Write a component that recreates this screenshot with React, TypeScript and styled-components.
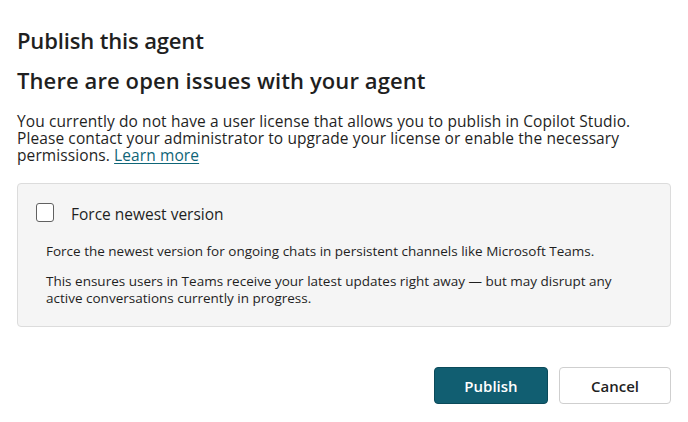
import React from "react";
import styled, { createGlobalStyle } from "styled-components";

const Global = createGlobalStyle`
  html, body { margin: 0; padding: 0; background: #ffffff; }
  body { font-family: "Open Sans", "Noto Sans", sans-serif; color: #1f1f1f; }
  * { box-sizing: border-box; }
`;

const Dialog = styled.div`
  width: 688px;
  height: 422px;
  padding: 26px 17px 0 17px;
  display: flex;
  flex-direction: column;
`;

const Title = styled.h1<{ $spacing: number }>`
  margin: 0;
  font-size: 22px;
  line-height: 28px;
  font-weight: 600;
  letter-spacing: ${(p) => p.$spacing}px;
`;

const Subtitle = styled(Title)`
  margin-top: 12px;
`;

const Body = styled.p`
  margin: 19px 0 0 0;
  max-width: 640px;
  font-size: 15.5px;
  line-height: 17px;
  letter-spacing: 0.1px;
`;

const Link = styled.a`
  color: #0f6577;
  text-decoration: underline;
  text-underline-offset: 2px;
`;

const OptionBox = styled.div`
  margin-top: 19px;
  background: #f5f5f5;
  border: 1px solid #dcdcdc;
  border-radius: 4px;
  height: 144px;
  padding: 19px 18px 0 18px;
  display: flex;
  flex-direction: column;
`;

const CheckRow = styled.label`
  display: flex;
  align-items: flex-start;
  gap: 17px;
`;

const CheckBox = styled.span`
  width: 18px;
  height: 19px;
  border: 1.5px solid #616161;
  border-radius: 3px;
  background: #ffffff;
  flex: none;
`;

const CheckLabel = styled.span`
  padding-top: 1px;
  font-size: 15.5px;
  line-height: 20px;
  font-weight: 500;
`;

const Description = styled.div`
  padding-left: 10px;
  margin-top: 19px;
  display: flex;
  flex-direction: column;
  gap: 13px;
`;

const DescText = styled.p`
  margin: 0;
  max-width: 590px;
  font-size: 13.5px;
  line-height: 17px;
`;

const Footer = styled.div`
  margin-top: 40px;
  display: flex;
  justify-content: flex-end;
  gap: 11px;
`;

const Button = styled.button<{ $primary?: boolean }>`
  width: ${(p) => (p.$primary ? "114px" : "112px")};
  height: 37px;
  border-radius: 4px;
  font-family: "Open Sans", "Noto Sans", sans-serif;
  font-size: 15px;
  font-weight: 600;
  cursor: pointer;
  background: ${(p) => (p.$primary ? "#115e71" : "#ffffff")};
  color: ${(p) => (p.$primary ? "#ffffff" : "#1f1f1f")};
  border: 1px solid ${(p) => (p.$primary ? "#0b4a5a" : "#cfcfcf")};
`;

export default function App() {
  return (
    <>
      <Global />
      <Dialog>
        <Title $spacing={-0.15}>Publish this agent</Title>
        <Subtitle $spacing={0.1}>There are open issues with your agent</Subtitle>
        <Body>
          You currently do not have a user license that allows you to publish in Copilot Studio.
          Please contact your administrator to upgrade your license or enable the necessary
          permissions. <Link href="#">Learn more</Link>
        </Body>
        <OptionBox>
          <CheckRow>
            <CheckBox />
            <CheckLabel>Force newest version</CheckLabel>
          </CheckRow>
          <Description>
            <DescText>
              Force the newest version for ongoing chats in persistent channels like Microsoft Teams.
            </DescText>
            <DescText>
              This ensures users in Teams receive your latest updates right away — but may disrupt any
              active conversations currently in progress.
            </DescText>
          </Description>
        </OptionBox>
        <Footer>
          <Button $primary>Publish</Button>
          <Button>Cancel</Button>
        </Footer>
      </Dialog>
    </>
  );
}
